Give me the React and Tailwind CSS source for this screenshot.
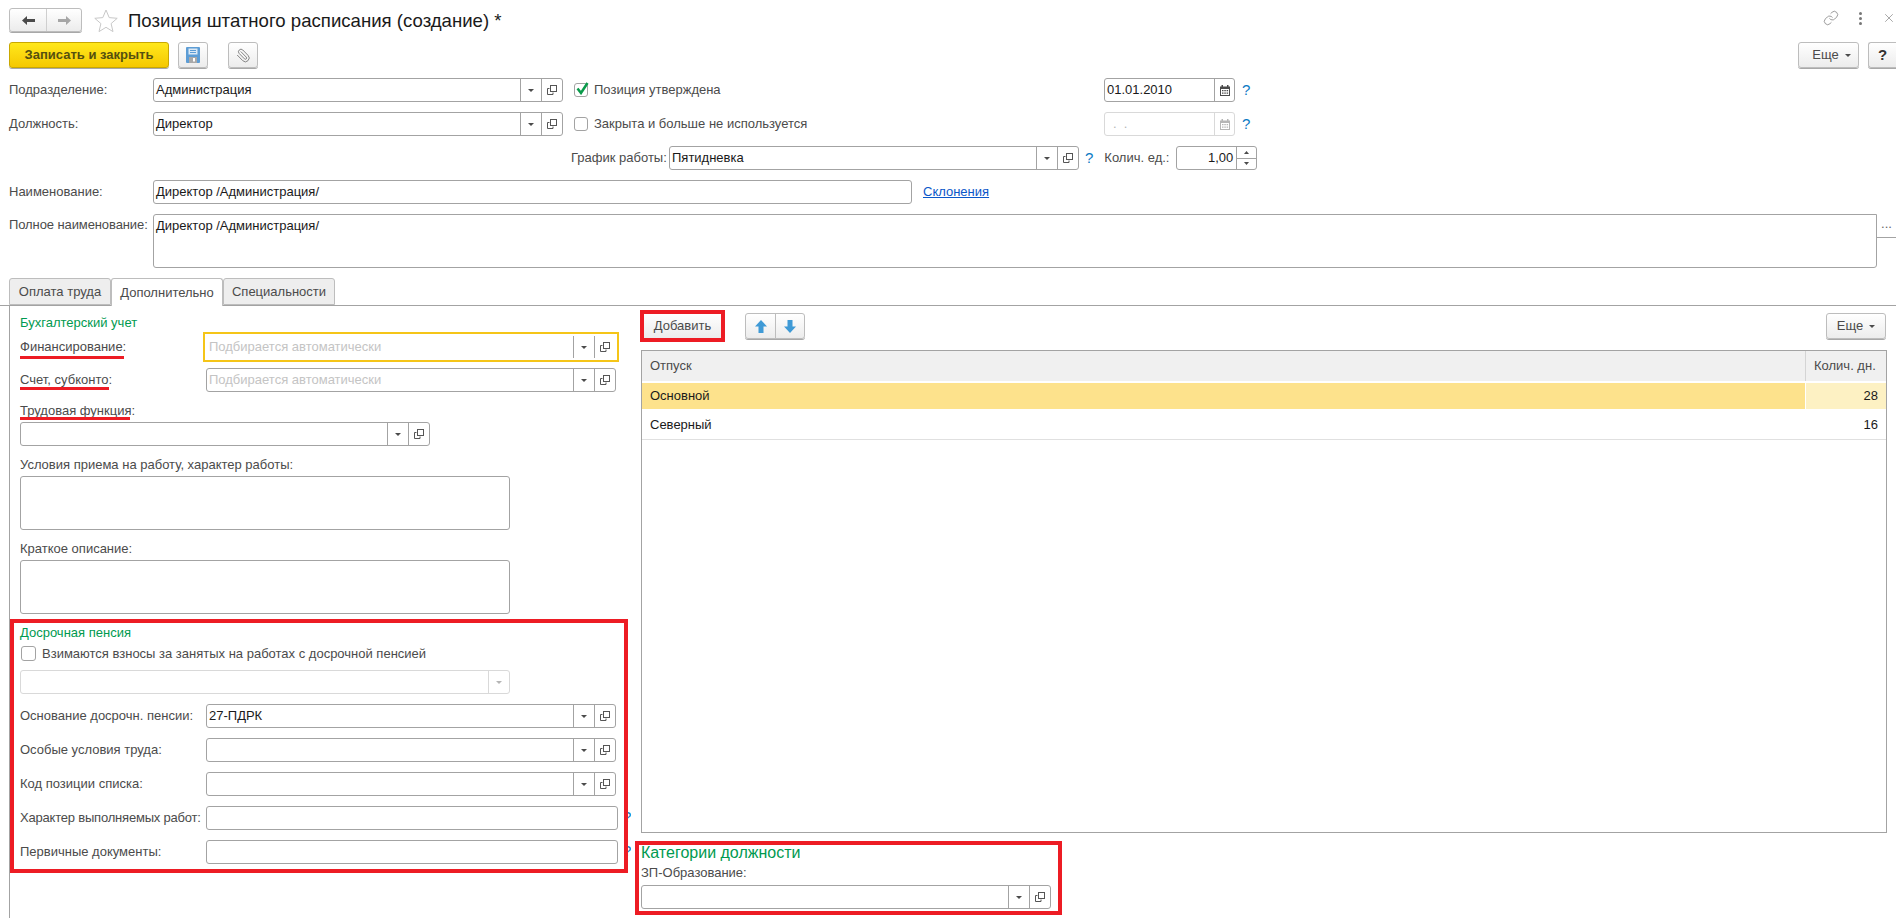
import { Link, Paperclip, X } from "lucide-react";

const OpenIcon = () => (
  <svg width="10" height="10" viewBox="0 0 10 10" fill="none" stroke="#555" strokeWidth="1">
    <path d="M0.5 3.500h2M0.500 3.500v6h5.500v-2" />
    <rect x="3.500" y="0.500" width="6" height="6" />
  </svg>
);

const ArrowDown = ({ color = "#4b4b4b" }) => (
  <svg width="6" height="3" viewBox="0 0 6 3">
    <path d="M0 0h6L3 3z" fill={color} />
  </svg>
);

const CalendarIcon = ({ color = "#4b4b4b" }) => (
  <svg width="10" height="11" viewBox="0 0 10 11">
    <path d="M1.500 0h1.500v1.500h4V0h1.500v1.500H10V11H0V1.500h1.500z" fill={color} />
    <path d="M1 4h8v6H1z" fill="#fff" />
    <path d="M2 5h1.500v1.200H2zM4.300 5h1.500v1.200H4.300zM6.600 5h1.500v1.200H6.600zM2 7.500h1.500v1.200H2zM4.300 7.500h1.500v1.200H4.300zM6.600 7.500h1.500v1.200H6.600z" fill={color} />
  </svg>
);

function Field({ className = "", value, placeholder, arrow = true, open = true, disabled, focused }) {
  const border = focused
    ? "border-transparent outline-2 outline-offset-1 outline-[#f5c518] rounded-none"
    : disabled
    ? "border-[#d9d9d9] rounded-[3px]"
    : "border-[#a3a3a3] rounded-[3px]";
  const divider = disabled ? "border-[#d9d9d9]" : "border-[#a3a3a3]";
  return (
    <div className={`flex h-6 shrink-0 border bg-white ${border} ${className}`}>
      <div className="flex-1 truncate pl-[2px] leading-[22px] text-[#1a1a1a]">
        {value}
        {placeholder && <span className="text-[#c4c4c4]">{placeholder}</span>}
      </div>
      {arrow && (
        <div className={`flex w-[21px] items-center justify-center border-l ${divider}`}>
          <ArrowDown color={disabled ? "#b5b5b5" : "#4b4b4b"} />
        </div>
      )}
      {open && (
        <div className={`flex w-[21px] items-center justify-center border-l ${divider}`}>
          <OpenIcon />
        </div>
      )}
    </div>
  );
}

const Btn = ({ className = "", children }) => (
  <div className={`flex items-center justify-center rounded-[3px] border border-[#bdbdbd] bg-gradient-to-b from-white to-[#ececec] shadow-[0_1px_0_#a8a8a8] ${className}`}>
    {children}
  </div>
);

const Help = ({ className = "" }) => (
  <span className={`text-[15px] text-[#0a7ac4] ${className}`}>?</span>
);

const Row = ({ label, children }) => (
  <div className="flex h-6 items-center">
    <div className="w-[186px] shrink-0 whitespace-nowrap text-[#4b4b4b]">{label}</div>
    {children}
  </div>
);

const Underlined = ({ children, line }) => (
  <span className="relative inline-block">
    {children}
    <span className={`absolute left-0 h-[3px] bg-[#ed1c24] ${line}`} />
  </span>
);

export default function App() {
  return (
    <div className="relative h-[918px] w-[1896px] overflow-hidden bg-white font-['Liberation_Sans',sans-serif] text-[13px] text-[#4b4b4b]">
      {/* Заголовок */}
      <div className="flex h-[42px] items-start pt-2">
        <div className="ml-[9px] flex h-6 w-[73px] rounded-[3px] border border-[#bdbdbd] bg-gradient-to-b from-white to-[#ececec] shadow-[0_1px_0_#a8a8a8]">
          <div className="flex w-[37px] items-center justify-center border-r border-[#cfcfcf]">
            <svg width="13" height="9" viewBox="0 0 13 9"><path d="M0 4.500L5 0v3h8v3H5v3z" fill="#4b4b4b" /></svg>
          </div>
          <div className="flex flex-1 items-center justify-center">
            <svg width="13" height="9" viewBox="0 0 13 9"><path d="M13 4.500L8 0v3H0v3h8v3z" fill="#a6a6a6" /></svg>
          </div>
        </div>
        <svg className="ml-[12px] mt-[1px]" width="24" height="23" viewBox="0 0 24 23" fill="none" stroke="#c8c8c8">
          <path d="M12 1l3.200 7.600 8 .7-6.100 5.300 1.900 8-7-4.300-7 4.300 1.900-8L.8 9.300l8-.7z" />
        </svg>
        <div className="ml-[10px] text-[18.6px] leading-[26px] text-[#1a1a1a]">Позиция штатного расписания (создание) *</div>
        <div className="ml-auto flex items-center pt-[2px]">
          <Link className="mr-[20px] text-[#6b6b6b]" size={16} strokeWidth={1} />
          <div className="mr-[20px] flex flex-col gap-[2px]">
            <span className="h-[3px] w-[3px] rounded-full bg-[#777]" />
            <span className="h-[3px] w-[3px] rounded-full bg-[#777]" />
            <span className="h-[3px] w-[3px] rounded-full bg-[#777]" />
          </div>
          <X className="text-[#6b6b6b]" size={14} strokeWidth={1} />
        </div>
      </div>

      {/* Панель команд */}
      <div className="flex h-[26px] pl-[9px]">
        <div className="flex w-[160px] items-center justify-center rounded-[3px] border border-[#c9a800] bg-gradient-to-b from-[#ffe81a] to-[#f5c800] font-bold text-[#55500f] shadow-[0_1px_0_#a8a8a8]">
          Записать и закрыть
        </div>
        <Btn className="ml-[9px] w-[30px]">
          <svg width="14" height="16" viewBox="0 0 14 16">
            <rect width="14" height="16" rx="1" fill="#5d9dd5" />
            <rect x="2.500" y="1.500" width="9" height="6" fill="#dce9f5" />
            <path d="M4 3.500h6M4 5.500h6" stroke="#5d9dd5" />
            <rect x="3" y="10" width="8" height="6" fill="#a9a9a9" />
            <rect x="7" y="11" width="2" height="3.500" fill="#fff" />
          </svg>
        </Btn>
        <Btn className="ml-[20px] w-[30px]">
          <Paperclip className="scale-x-[-1] text-[#7d7d7d]" size={15} strokeWidth={1.500} />
        </Btn>
        <div className="ml-auto flex">
          <Btn className="w-[61px] gap-[6px]">
            <span className="pl-[6px]">Еще</span>
            <ArrowDown />
          </Btn>
          <Btn className="ml-[9px] w-[28px] rounded-r-none border-r-0 text-[15px] font-bold text-[#333]">?</Btn>
        </div>
      </div>

      {/* Шапка формы */}
      <div className="flex flex-col gap-[10px] pl-[9px] pt-[10px]">
        <div className="flex h-6 items-center">
          <div className="w-[144px]">Подразделение:</div>
          <Field className="w-[410px]" value="Администрация" />
          <div className="ml-[11px] flex h-[14px] w-[14px] items-center justify-center rounded-[3px] border border-[#a3a3a3]">
            <svg className="-mt-[3px] ml-[2px] shrink-0" width="13" height="13" viewBox="0 0 13 13"><path d="M1.500 6.500l3.500 4.500L11.500 1" fill="none" stroke="#0a9a4a" strokeWidth="2.500" /></svg>
          </div>
          <div className="ml-[6px] w-[510px]">Позиция утверждена</div>
          <Field className="w-[131px]" value="01.01.2010" arrow={false} open={false} />
          <div className="-ml-[21px] flex h-6 w-[21px] items-center justify-center border-l border-[#a3a3a3]"><CalendarIcon /></div>
          <Help className="ml-[7px]" />
        </div>
        <div className="flex h-6 items-center">
          <div className="w-[144px]">Должность:</div>
          <Field className="w-[410px]" value="Директор" />
          <div className="ml-[11px] h-[14px] w-[14px] rounded-[3px] border border-[#a3a3a3]" />
          <div className="ml-[6px] w-[510px]">Закрыта и больше не используется</div>
          <Field className="w-[131px]" value={<span className="pl-[6px] text-[#b5b5b5]">.&nbsp;&nbsp;.</span>} arrow={false} open={false} disabled />
          <div className="-ml-[21px] flex h-6 w-[21px] items-center justify-center border-l border-[#d9d9d9]"><CalendarIcon color="#b5b5b5" /></div>
          <Help className="ml-[7px]" />
        </div>
        <div className="flex h-6 items-center">
          <div className="ml-[562px] w-[98px]">График работы:</div>
          <Field className="w-[410px]" value="Пятидневка" />
          <Help className="ml-[6px]" />
          <div className="ml-[11px] w-[72px]">Колич. ед.:</div>
          <div className="flex h-6 w-[81px] rounded-[3px] border border-[#a3a3a3]">
            <div className="flex-1 pr-[3px] text-right leading-[22px] text-[#1a1a1a]">1,00</div>
            <div className="flex w-5 flex-col border-l border-[#a3a3a3]">
              <div className="flex flex-1 items-center justify-center border-b border-[#a3a3a3]">
                <svg width="5" height="3" viewBox="0 0 5 3"><path d="M0 3h5L2.500 0z" fill="#4b4b4b" /></svg>
              </div>
              <div className="flex flex-1 items-center justify-center"><svg width="5" height="3" viewBox="0 0 5 3"><path d="M0 0h5L2.500 3z" fill="#4b4b4b" /></svg></div>
            </div>
          </div>
        </div>
        <div className="flex h-6 items-center">
          <div className="w-[144px]">Наименование:</div>
          <Field className="w-[759px]" value="Директор /Администрация/" arrow={false} open={false} />
          <a className="ml-[11px] text-[#0b57c9] underline">Склонения</a>
        </div>
        <div className="flex h-[54px]">
          <div className="w-[144px] whitespace-nowrap pt-[1px] tracking-[-0.1px]">Полное наименование:</div>
          <div className="w-[1724px] rounded-l-[3px] rounded-br-[3px] border border-[#a3a3a3] pl-[2px] pt-[1px] text-[#1a1a1a]">Директор /Администрация/</div>
          <div className="flex h-6 flex-1 items-start justify-center border-b border-[#a3a3a3] text-[#666]">...</div>
        </div>
      </div>

      {/* Вкладки */}
      <div className="mt-[10px] flex h-[28px] items-stretch border-b border-[#a3a3a3] pl-[9px]">
        <div className="flex w-[102px] items-center justify-center rounded-t-[3px] border border-[#bdbdbd] bg-[#eeeeee]">Оплата труда</div>
        <div className="-mb-px flex w-[112px] items-center justify-center rounded-t-[3px] border border-b-0 border-[#bdbdbd] bg-white">Дополнительно</div>
        <div className="flex w-[112px] items-center justify-center rounded-t-[3px] border border-[#bdbdbd] bg-[#eeeeee]">Специальности</div>
      </div>

      <div className="flex">
        {/* Левая колонка */}
        <div className="relative ml-[9px] h-[612px] w-[631px] shrink-0 border-l border-[#a3a3a3] pl-[10px]">
          <div className="mt-[9px] h-4 leading-4 text-[#009a50]">Бухгалтерский учет</div>
          <div className="mt-1 flex h-6 items-center">
            <div className="w-[186px] text-[#4b4b4b]"><Underlined line="top-[19px] w-[104px]">Финансирование:</Underlined></div>
            <Field className="w-[410px]" placeholder="Подбирается автоматически" focused />
          </div>
          <div className="mt-[9px] flex h-6 items-center">
            <div className="w-[186px]"><Underlined line="top-[17px] w-[89px]">Счет, субконто:</Underlined></div>
            <Field className="w-[410px]" placeholder="Подбирается автоматически" />
          </div>
          <div className="mt-[11px] h-4 leading-4"><Underlined line="top-[14px] w-[110px]">Трудовая функция:</Underlined></div>
          <Field className="mt-[3px] w-[410px]" />
          <div className="mt-[11px] h-4 leading-4">Условия приема на работу, характер работы:</div>
          <div className="mt-[3px] h-[54px] w-[490px] rounded-[3px] border border-[#a3a3a3]" />
          <div className="mt-[11px] h-4 leading-4">Краткое описание:</div>
          <div className="mt-[3px] h-[54px] w-[490px] rounded-[3px] border border-[#a3a3a3]" />

          {/* Досрочная пенсия */}
          <div className="-ml-[10px] mt-[5px] h-[254px] w-[618px] border-4 border-[#ed1c24] pl-[6px] pt-[2px]">
            <div className="h-4 leading-4 text-[#009a50]">Досрочная пенсия</div>
            <div className="mt-[5px] flex h-[15px] items-center">
              <div className="ml-px h-[15px] w-[15px] rounded-[3px] border border-[#a3a3a3]" />
              <div className="ml-[6px]">Взимаются взносы за занятых на работах с досрочной пенсией</div>
            </div>
            <Field className="mt-[9px] w-[490px]" open={false} disabled />
            <div className="mt-[10px] flex flex-col gap-[10px]">
              <Row label="Основание досрочн. пенсии:"><Field className="w-[410px]" value="27-ПДРК" /></Row>
              <Row label="Особые условия труда:"><Field className="w-[410px]" /></Row>
              <Row label="Код позиции списка:"><Field className="w-[410px]" /></Row>
              <Row label={<span className="tracking-[-0.2px]">Характер выполняемых работ:</span>}><Field className="w-[412px]" arrow={false} open={false} /></Row>
              <Row label="Первичные документы:"><Field className="w-[412px]" arrow={false} open={false} /></Row>
            </div>
          </div>
          {/* кусочки "?" из-под рамки */}
          <div className="absolute left-[618px] top-[503px] h-4 w-[3px] overflow-hidden text-[15px] leading-4 text-[#0a7ac4]"><span className="-ml-[5px] block">?</span></div>
          <div className="absolute left-[618px] top-[537px] h-4 w-[3px] overflow-hidden text-[15px] leading-4 text-[#0a7ac4]"><span className="-ml-[5px] block">?</span></div>
        </div>

        {/* Правая колонка */}
        <div className="flex-1 pr-[9px]">
          <div className="mt-1 flex h-8 items-center">
            <div className="h-8 w-[85px] border-4 border-[#ed1c24] bg-gradient-to-b from-white to-[#ececec]">
              <div className="text-center leading-[24px]">Добавить</div>
            </div>
            <div className="ml-5 flex h-[26px] w-[60px] rounded-[3px] border border-[#bdbdbd] bg-gradient-to-b from-white to-[#ececec] shadow-[0_1px_0_#a8a8a8]">
              <div className="flex w-[30px] items-center justify-center border-r border-[#bdbdbd]">
                <svg width="12" height="13" viewBox="0 0 12 13"><path d="M6 0l6 6.500H8.500V13h-5V6.500H0z" fill="#3f9ad6" /></svg>
              </div>
              <div className="flex flex-1 items-center justify-center">
                <svg width="12" height="13" viewBox="0 0 12 13"><path d="M6 13l6-6.500H8.500V0h-5v6.500H0z" fill="#3f9ad6" /></svg>
              </div>
            </div>
            <Btn className="ml-auto mr-px h-[26px] w-[60px] gap-[6px]">
              <span>Еще</span>
              <ArrowDown />
            </Btn>
          </div>

          <div className="ml-px mt-2 h-[483px] w-[1246px] border border-[#a3a3a3]">
            <div className="flex h-[30px] bg-[#f0f0f0]">
              <div className="flex-1 pl-[8px] leading-[30px]">Отпуск</div>
              <div className="w-[81px] border-l border-[#d4d4d4] pl-[8px] leading-[30px]">Колич. дн.</div>
            </div>
            <div className="mt-[2px] flex h-[26px] bg-[#fde28c] leading-[26px] text-[#1a1a1a]">
              <div className="flex-1 pl-[8px]">Основной</div>
              <div className="w-[81px] border-l border-white bg-[#fdf1c3] pr-[8px] text-right">28</div>
            </div>
            <div className="mt-[2px] flex h-[29px] border-b border-[#e0e0e0] leading-[28px] text-[#1a1a1a]">
              <div className="flex-1 pl-[8px]">Северный</div>
              <div className="w-[81px] pr-[8px] text-right">16</div>
            </div>
          </div>

          {/* Категории должности */}
          <div className="-ml-[5px] mt-[8px] h-[74px] w-[427px] border-4 border-[#ed1c24] pl-[2px]">
            <div className="h-5 text-[16px] leading-[15px] text-[#009a50]">Категории должности</div>
            <div className="h-4 leading-[15px]">ЗП-Образование:</div>
            <Field className="mt-[4px] w-[410px]" />
          </div>
        </div>
      </div>
    </div>
  );
}
